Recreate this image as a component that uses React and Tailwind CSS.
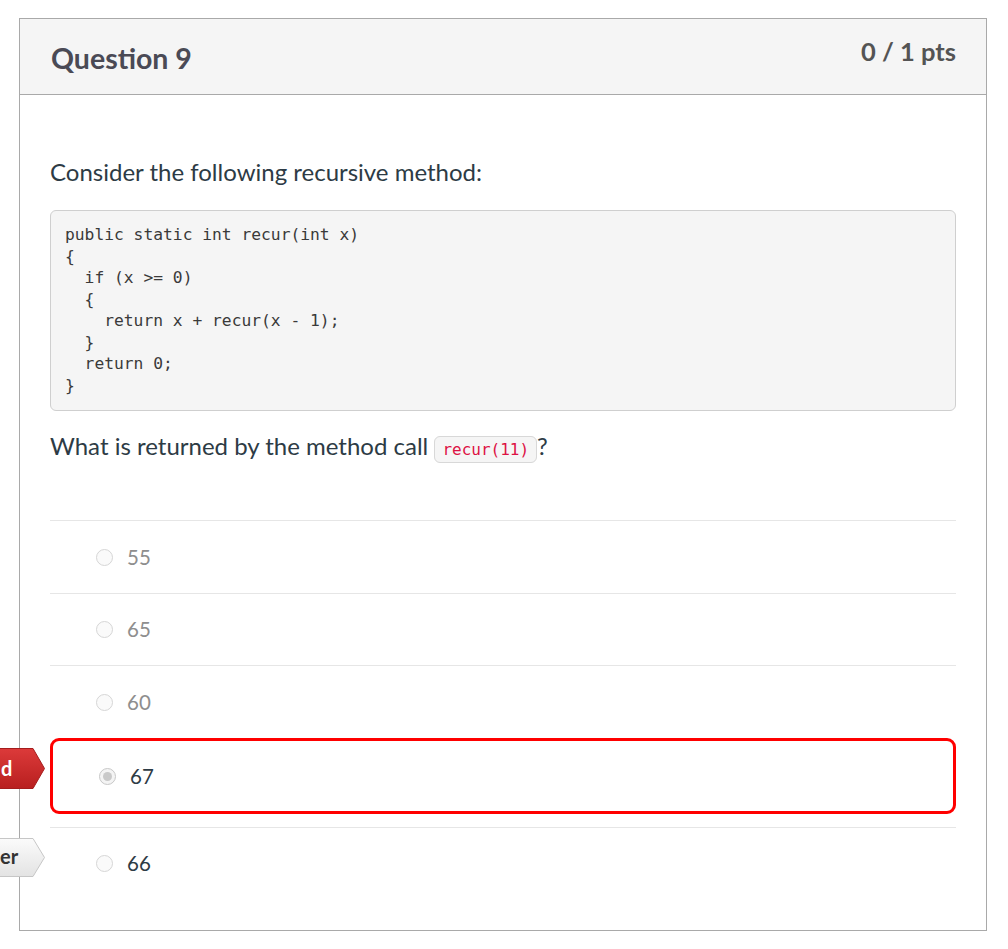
export default function App() {
  const codeLines = [
    "public static int recur(int x)",
    "{",
    "  if (x >= 0)",
    "  {",
    "    return x + recur(x - 1);",
    "  }",
    "  return 0;",
    "}",
  ];
  const lato = "font-['Lato','Liberation_Sans',sans-serif]";
  const mono = "font-['DejaVu_Sans_Mono','Liberation_Mono',monospace]";

  const Radio = ({ checked }) => (
    <span
      className={
        "flex h-[17px] w-[17px] shrink-0 items-center justify-center rounded-full border " +
        (checked ? "border-[#c8c8c8] bg-[#f4f4f4]" : "border-[#d6d6d6] bg-[#fafafa]")
      }
    >
      {checked && <span className="h-[9px] w-[9px] rounded-full bg-[#c9c9c9]" />}
    </span>
  );

  const Row = ({ label, dim, tall }) => (
    <div
      className={
        "flex items-center gap-[14px] border-t border-[#e6e6e6] pl-[46px] " + (tall ? "h-[73px]" : "h-[72px]")
      }
    >
      <Radio />
      <span className={"text-[20.5px] " + (dim ? "text-[#8e8e8e]" : "text-[#2d3b45]")}>{label}</span>
    </div>
  );

  return (
    <div className={"min-h-[949px] bg-white pl-[19px] pt-[18px] " + lato}>
      <div className="w-[968px] border border-[#a9a9a9]">
        <div className="flex h-[76px] items-start justify-between border-b border-[#a9a9a9] bg-[#f5f5f5] pl-[31px] pr-[30px]">
          <h2 className="mt-[22px] text-[28.5px] font-bold leading-[34px] text-[#4a4a55]">Question 9</h2>
          <div className="mt-[17px] text-[25.5px] font-bold leading-[30px] text-[#545454]">0 / 1 pts</div>
        </div>

        <div className="px-[30px] pb-[31px] pt-[62px]">
          <p className="text-[24px] leading-[30px] text-[#2d3b45]">Consider the following recursive method:</p>

          <pre
            className={
              "mt-[23px] rounded-[6px] border border-[#cfcfcf] bg-[#f5f5f5] pb-[14px] pl-[14px] pt-[13px] text-[16.3px] leading-[21.5px] text-[#3a3a3a] " +
              mono
            }
          >
            {codeLines.join("\n")}
          </pre>

          <p className="mt-[20px] text-[24px] leading-[30px] text-[#2d3b45]">
            What is returned by the method call{" "}
            <code
              className={
                "rounded-[6px] border border-[#d8d8d8] bg-[#f5f5f5] px-[7px] py-[3px] text-[16px] text-[#dd1144] " +
                mono
              }
            >
              recur(11)
            </code>
            ?
          </p>

          <div className="mt-[55px]">
            <Row label="55" dim tall />
            <Row label="65" dim />
            <Row label="60" dim tall />

            <div className="relative">
              <div className="absolute left-[-50px] top-[10px] h-[41px] w-[46px]">
                <svg className="absolute inset-0" width="46" height="41" viewBox="0 0 46 41">
                  <defs>
                    <linearGradient id="rg" x1="0" y1="0" x2="0" y2="1">
                      <stop offset="0" stopColor="#dc3a3a" />
                      <stop offset="1" stopColor="#b81f1f" />
                    </linearGradient>
                  </defs>
                  <polygon points="-2,0.5 33,0.5 44.5,20.5 33,40.5 -2,40.5" fill="url(#rg)" stroke="#a51c1c" strokeWidth="1" />
                </svg>
                <span className="absolute left-[1px] top-[7px] text-[20px] font-bold leading-[26px] text-white">d</span>
              </div>
              <div className="flex h-[76px] items-center gap-[14px] rounded-[9px] border-[3px] border-[#ff0000] pl-[46px]">
                <Radio checked />
                <span className="text-[20.5px] text-[#2d3b45]">67</span>
              </div>
            </div>

            <div className="relative mt-[13px]">
              <div className="absolute left-[-50px] top-[11px] h-[39px] w-[46px]">
                <svg className="absolute inset-0" width="46" height="39" viewBox="0 0 46 39">
                  <defs>
                    <linearGradient id="gg" x1="0" y1="0" x2="0" y2="1">
                      <stop offset="0" stopColor="#fbfbfb" />
                      <stop offset="1" stopColor="#e3e3e3" />
                    </linearGradient>
                  </defs>
                  <polygon points="-2,0.5 33,0.5 44.5,19.5 33,38.5 -2,38.5" fill="url(#gg)" stroke="#c6c6c6" strokeWidth="1" />
                </svg>
                <span className="absolute left-[0px] top-[5px] text-[20px] font-bold leading-[26px] text-[#333]">er</span>
              </div>
              <div className="flex h-[72px] items-center gap-[14px] border-t border-[#e6e6e6] pl-[46px]">
                <Radio />
                <span className="text-[20.5px] text-[#2d3b45]">66</span>
              </div>
            </div>
          </div>
        </div>
      </div>
    </div>
  );
}
